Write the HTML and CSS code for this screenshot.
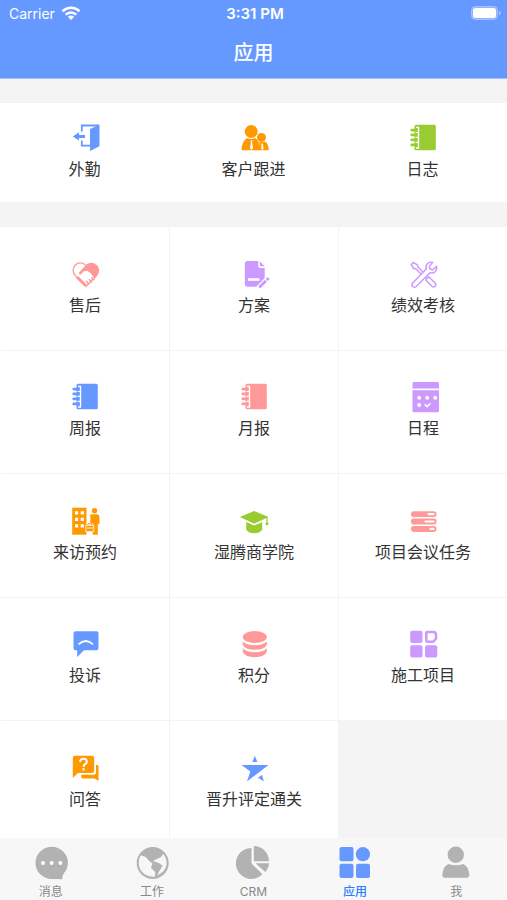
FILE: index.html
```html
<!DOCTYPE html>
<html lang="zh-CN">
<head>
    <meta charset="UTF-8">
    <meta name="viewport" content="width=device-width, initial-scale=1.0">
    <title>应用</title>
    <link rel="stylesheet" href="styles.css">
</head>
<body>
    <!-- Shared by the three report entries -->
    <svg class="sprite" aria-hidden="true">
        <symbol id="notebook" viewBox="0 0 30 30">
            <path fill="currentColor" d="M8 1.7h18.3q1.5 0 1.5 1.5v22.6q0 1.5-1.5 1.5H8q-1.5 0-1.5-1.5v-2.6H3.700a1.3 1.3 0 0 1 0-2.6h2.8v-2.4H3.7a1.3 1.3 0 0 1 0-2.6h2.8v-2.4H3.7a1.3 1.3 0 0 1 0-2.6h2.8V8.4H3.7a1.3 1.3 0 0 1 0-2.6h2.8V3.2q0-1.5 1.5-1.5z"/>
            <path fill="none" stroke="#fff" stroke-width="1.4" d="M8 4.4h2.5v20.6H8"/>
            <path stroke="#fff" stroke-width="1.2" d="M7.5 9.5h3M7.5 14.3h3M7.5 19.3h3"/>
        </symbol>
    </svg>

    <div class="app">
        <header class="header">
            <div class="status-bar">
                <div class="carrier">
                    <span>Carrier</span>
                    <svg width="20" height="14" viewBox="0 0 20 14" fill="none" stroke="#fff" stroke-width="2.6">
                        <path d="M1.5 5.2a12.2 12.2 0 0 1 17 0M4.7 8.6a7.6 7.6 0 0 1 10.6 0"/>
                        <path fill="#fff" stroke="none" d="M10 14l-3.2-3.2a4.6 4.6 0 0 1 6.4 0z"/>
                    </svg>
                </div>
                <span class="time">3:31 PM</span>
                <svg class="battery" width="30" height="14" viewBox="0 0 30 14">
                    <rect x=".5" y=".5" width="26" height="13" rx="4" fill="#8fb3ff" stroke="#a5c2ff"/>
                    <rect x="2" y="2" width="23" height="10" rx="2.5" fill="#fff"/>
                    <path fill="#a5c2ff" d="M28 4.5q2 1 2 2.5t-2 2.5z"/>
                </svg>
            </div>
            <h1>应用</h1>
        </header>

        <main class="content">
            <nav class="shortcuts" aria-label="常用">
                <a class="item blue" href="#">
                    <svg class="icon" viewBox="0 0 30 30">
                        <path fill="none" stroke="currentColor" stroke-width="1.8" d="M11.8 8.5V2.5H29M11.8 17.5v5.2H20"/>
                        <path fill="currentColor" d="M20 6l9.5-4.2v21.4L20 28zM2.8 13.4L9 9.3v2.6h6v3H9v2.7z"/>
                    </svg>
                    <span>外勤</span>
                </a>
                <a class="item orange" href="#">
                    <svg class="icon" viewBox="0 0 30 30">
                        <circle cx="12.2" cy="8.5" r="6.5" fill="currentColor"/>
                        <path fill="currentColor" d="M2.5 27.2q.2-9.4 6-12.2 3.7 2 7.4 0 5 2.2 5.3 12.2z"/>
                        <circle cx="22.5" cy="14.4" r="4.5" fill="currentColor"/>
                        <path fill="currentColor" d="M20.5 27.200V18.400q3 1.400 5.300 0 3.700 1.700 4 8.800z"/>
                        <path fill="#fff" d="M11.5 17.5h2l-.4 2 1 5.5-1.600 2-1.600-2 1-5.5zM22.500 20.500h1.300l.8 5-1.400 1.700-1-1.700z"/>
                    </svg>
                    <span>客户跟进</span>
                </a>
                <a class="item green" href="#">
                    <svg class="icon"><use href="#notebook"/></svg>
                    <span>日志</span>
                </a>
            </nav>

            <nav class="grid" aria-label="全部应用">
                <a class="item pink" href="#">
                    <svg class="icon" viewBox="0 0 30 30">
                        <path fill="none" stroke="currentColor" stroke-width="1.3" d="M16 6.5C13 3 8 3.3 5.2 6.2c-3 3-2.7 7.5.2 10.7L16 27.3l10.5-10.6"/>
                        <path fill="currentColor" d="M9 13.5l7-7.5c3-3.2 7.500-3 10.500-.3 3.500 3.300 3.500 8 .3 11.300l-2.300 2.500-4-5.500-3.200-2.300-3.500.6-3 3.200q-2 .3-1.800-2z"/>
                        <path fill="none" stroke="currentColor" stroke-width="3" d="M7 18l8.500 8.500"/>
                        <path fill="none" stroke="currentColor" stroke-width="1.4" stroke-linecap="round" d="M16.500 22.300l2.300 2.800M19.300 20.500l2.300 2.700M21.700 18.500l2.300 2.300"/>
                    </svg>
                    <span>售后</span>
                </a>
                <a class="item purple" href="#">
                    <svg class="icon" viewBox="0 0 30 30">
                        <path fill="currentColor" d="M8.8 2h10.400v4.500q0 2.500 2.500 2.500h4v10.200L18 27.800H8.800q-3 0-3-3V5q0-3 3-3z"/>
                        <path fill="currentColor" d="M20.700 2.200l5 5h-3.500q-1.500 0-1.500-1.500z"/>
                        <path stroke="#fff" stroke-width="2.6" d="M9 20.500h11.500"/>
                        <path stroke="#fff" stroke-width="5" d="M19 29.500l10-10"/>
                        <path stroke="currentColor" stroke-width="2.800" d="M20.200 28.500l6.800-6.800M27.700 21l2-2"/>
                    </svg>
                    <span>方案</span>
                </a>
                <a class="item purple" href="#">
                    <svg class="icon" viewBox="0 0 30 30" fill="#fff" stroke="currentColor" stroke-width="1.5" stroke-linejoin="round">
                        <path d="M3.200 5.500l2-2 4.300 2.300.5 2.200L19 17l-2 2-9-9-2.300-.5z"/>
                        <path d="M18.500 20l2.300-2.300 6.300 6.300q1.500 1.700 0 3.200-1.500 1.500-3.200 0l-5.400-5.400q-.8-.8 0-1.800z"/>
                        <path d="M24.700 3.500l-3.500 3.700.8 2.800 2.900.7 3.500-3.500q.8 3.300-1.200 5.500-2.200 2-5.200 1L8.200 27.500q-1.700 1.500-3.500 0-1.700-1.700 0-3.500L18.300 10q-1-3.200 1-5.300 2.200-2.200 5.400-1.200z"/>
                    </svg>
                    <span>绩效考核</span>
                </a>
                <a class="item blue" href="#">
                    <svg class="icon"><use href="#notebook"/></svg>
                    <span>周报</span>
                </a>
                <a class="item pink" href="#">
                    <svg class="icon"><use href="#notebook"/></svg>
                    <span>月报</span>
                </a>
                <a class="item purple" href="#">
                    <svg class="icon" viewBox="0 0 30 30">
                        <path fill="currentColor" d="M6 0h23.500q1.500 0 1.500 1.500v5H4.500v-5Q4.500 0 6 0zM4.500 8.300H31v20.500q0 1.500-1.500 1.500H6q-1.500 0-1.500-1.500z"/>
                        <g fill="#fff">
                            <circle cx="11.2" cy="15.7" r="2"/>
                            <circle cx="19.2" cy="15.7" r="2"/>
                            <circle cx="27.2" cy="15.7" r="2"/>
                            <circle cx="11.2" cy="23" r="2"/>
                        </g>
                        <path fill="none" stroke="#fff" stroke-width="1.5" d="M16.700 22.300l2.400 2.300 3.400-3.400"/>
                    </svg>
                    <span>日程</span>
                </a>
                <a class="item orange" href="#">
                    <svg class="icon" viewBox="0 0 30 30">
                        <path fill="currentColor" d="M2.200 1.700h14.300v27H2.200z"/>
                        <path fill="#fff" d="M5 5.300h3.200v3.200H5zM10.700 5.300h3.200v3.200h-3.200zM5 11.800h3.200V15H5zM10.700 11.800h3.200V15h-3.200zM5 18.300h3.200v3.200H5zM10.700 18.300h3.200v3.200h-3.200z"/>
                        <circle cx="24.5" cy="4.7" r="2.7" fill="currentColor"/>
                        <path fill="currentColor" d="M21.800 8.300h5.400q2.300.3 2.300 3V18h-1.700v10.700h-5.200V17h-2.200v-5.700q-.9-2.700 1.400-3z"/>
                        <path fill="currentColor" stroke="#fff" stroke-width=".8" d="M15.800 19.300h8v6.400h-8z"/>
                        <path fill="none" stroke="currentColor" d="M18 19.300v-1.600h3.700v1.600"/>
                        <path stroke="#fff" stroke-width=".8" d="M16.500 22h6.700"/>
                    </svg>
                    <span>来访预约</span>
                </a>
                <a class="item green" href="#">
                    <svg class="icon" viewBox="0 0 30 30">
                        <path fill="currentColor" d="M.8 11l14.400-6 14.300 6-14.300 6.700z"/>
                        <path fill="currentColor" d="M7.200 16l8 3.500 8-3.500v7.700q-2.500 3.500-8 3.500t-8-3.500z"/>
                        <path stroke="currentColor" stroke-width="1.2" d="M28 11v6"/>
                        <circle cx="28" cy="17.7" r="1.5" fill="currentColor"/>
                    </svg>
                    <span>湿腾商学院</span>
                </a>
                <a class="item pink" href="#">
                    <svg class="icon" viewBox="0 0 30 30">
                        <g fill="currentColor">
                            <rect x="3" y="5.2" width="25.5" height="5.9" rx="2.8"/>
                            <rect x="3" y="12.6" width="25.5" height="5.9" rx="2.8"/>
                            <rect x="3" y="20" width="25.5" height="5.9" rx="2.8"/>
                        </g>
                        <path stroke="#fff" stroke-width="2.2" stroke-linecap="round" d="M20.500 8.100h5M17.500 15.500h8M22.500 22.900h3"/>
                    </svg>
                    <span>项目会议任务</span>
                </a>
                <a class="item blue" href="#">
                    <svg class="icon" viewBox="0 0 30 30">
                        <path fill="currentColor" d="M5.500 2.300h21q2 0 2 2v15q0 2-2 2H14L7.200 28v-6.700H5.500q-2 0-2-2v-15q0-2 2-2z"/>
                        <path fill="none" stroke="#fff" stroke-width="1.8" d="M8.500 15.300q7.300-6.500 14.500 0"/>
                    </svg>
                    <span>投诉</span>
                </a>
                <a class="item pink" href="#">
                    <svg class="icon" viewBox="0 0 30 30">
                        <ellipse cx="15.8" cy="8" rx="12" ry="6" fill="currentColor"/>
                        <path fill="currentColor" d="M3.800 12.300q3.500 3.900 12 3.900t12-3.900v3.500q-2 5-12 5t-12-5zM3.800 19.300q3.500 3.900 12 3.900t12-3.900v3.500q-2 5.400-12 5.400t-12-5.400z"/>
                    </svg>
                    <span>积分</span>
                </a>
                <a class="item purple" href="#">
                    <svg class="icon" viewBox="0 0 30 30">
                        <g fill="currentColor">
                            <rect x="2.2" y="1.7" width="12.3" height="12.3" rx="2"/>
                            <rect x="2.2" y="16.3" width="12.3" height="12.3" rx="2"/>
                            <rect x="17" y="16.3" width="12.3" height="12.3" rx="2"/>
                        </g>
                        <path fill="none" stroke="currentColor" stroke-width="2.6" d="M19.400 3h5.800q2.800 0 2.800 2.800v4l-2.800 2.900h-5.800q-1.100 0-1.100-1.100V4.100q0-1.100 1.100-1.100z"/>
                    </svg>
                    <span>施工项目</span>
                </a>
                <a class="item orange" href="#">
                    <svg class="icon" viewBox="0 0 30 30">
                        <path fill="currentColor" d="M26 12h1q1.500 0 1.500 1.500V28l-3.700-2.600H13q-1.800 0-1.800-2v-1.600h12.500Q26 21.800 26 19.500z"/>
                        <path fill="currentColor" d="M5 2.700h17q2.200 0 2.200 2.200v12.900q0 2.200-2.200 2.200H8l-5.200 5V4.900Q2.800 2.700 5 2.700z"/>
                        <path fill="none" stroke="#fff" stroke-width="2" d="M10 8.800q.3-3 3.500-3t3.400 2.700q0 1.500-1.700 2.600-1.700 1-1.700 2.900M13.500 15.200v2.200"/>
                    </svg>
                    <span>问答</span>
                </a>
                <a class="item blue" href="#">
                    <svg class="icon" viewBox="0 0 30 30" fill="currentColor">
                        <path d="M15.800 2.700l2.600 6.200h-5zM2.500 12h27L8 28.500l3.300-10z"/>
                        <path d="M18.800 24.700l4.200-2.700 1.900 6.200z"/>
                    </svg>
                    <span>晋升评定通关</span>
                </a>
            </nav>
        </main>

        <nav class="tab-bar" aria-label="主导航">
            <a class="tab" href="#">
                <svg viewBox="0 0 34 34">
                    <path fill="currentColor" d="M17.700.7a16.200 16.200 0 0 1 16.200 16.200q0 5.500-3.700 9.800-2 2.500-1.900 6.600-5.400-.7-10.600-.2A16.200 16.200 0 0 1 17.700.7z"/>
                    <g fill="#fff">
                        <circle cx="9" cy="17" r="2"/>
                        <circle cx="17.7" cy="17" r="2"/>
                        <circle cx="26.3" cy="17" r="2"/>
                    </g>
                </svg>
                <span>消息</span>
            </a>
            <a class="tab" href="#">
                <svg viewBox="0 0 34 34">
                    <circle cx="17.7" cy="17" r="16" fill="currentColor"/>
                    <path fill="#f7f7f7" d="M5.800 9.300l5 1.700 4 4.500 2.500 1.700-1.300 4.800 4.300 4-.6 4.800C10.500 31.300 3.700 25 3.700 17q0-4.500 2.100-7.700z"/>
                    <path fill="#f7f7f7" d="M28.300 8q4 5 3.200 11-1 6.500-9.500 10.500l3-5.500 2.700-4.500-4-2.500-5.700-2 4.500-2.500 3-1z"/>
                </svg>
                <span>工作</span>
            </a>
            <a class="tab" href="#">
                <svg viewBox="0 0 34 34" fill="currentColor">
                    <path d="M15.500 2v15.500l11 10.800A15.500 15.500 0 1 1 15.500 2z"/>
                    <path d="M17.800 0A15.300 15.300 0 0 1 33 15.200H17.800zM19.500 17.300H33q-.3 5-3.700 8.600z"/>
                </svg>
                <span>CRM</span>
            </a>
            <a class="tab active" href="#" aria-current="page">
                <svg viewBox="0 0 34 34" fill="currentColor">
                    <rect x="1.5" y="1" width="14" height="14.3" rx="2"/>
                    <circle cx="24.9" cy="8.2" r="7.1"/>
                    <rect x="1.5" y="17.7" width="14" height="14.3" rx="2"/>
                    <rect x="18" y="17.7" width="14" height="14.3" rx="2"/>
                </svg>
                <span>应用</span>
            </a>
            <a class="tab" href="#">
                <svg viewBox="0 0 34 34" fill="currentColor">
                    <circle cx="16.8" cy="8.7" r="8.2"/>
                    <path d="M9.500 18q7.300 2.500 14.600 0 5.200 2 6.200 10.500.2 3.200-2.500 3.200h-22q-2.700 0-2.500-3.200Q4.300 20 9.500 18z"/>
                </svg>
                <span>我</span>
            </a>
        </nav>
    </div>
</body>
</html>
```
FILE: styles.css
```css
* {
    box-sizing: border-box;
}

body {
    margin: 0;
    font-family: Inter, "Noto Sans CJK SC", sans-serif;
    background-color: #f4f4f4;
    color: #333;
}

a {
    color: inherit;
    text-decoration: none;
}

.sprite {
    display: none;
}

.app {
    display: flex;
    flex-direction: column;
    height: 100vh;
}

/* Header */
.header {
    padding-bottom: 10px;
    background-color: #6699ff;
    border-bottom: 1px solid #a3c2fb;
    color: #fff;
}

.status-bar {
    display: grid;
    grid-template-columns: 1fr auto 1fr;
    align-items: center;
    height: 26px;
    padding: 0 6px 0 9px;
    font-size: 14px;
}

.carrier {
    display: flex;
    align-items: center;
    gap: 6px;
}

.time {
    font-size: 15px;
    font-weight: 600;
}

.battery {
    justify-self: end;
}

h1 {
    margin: 12px 0 0;
    font-size: 20px;
    font-weight: 500;
    line-height: 30px;
    text-align: center;
}

/* Content */
.content {
    flex: 1;
    min-height: 0;
    padding-top: 24px;
    overflow-y: auto;
    scrollbar-width: none;
}

.shortcuts,
.grid {
    display: grid;
    grid-template-columns: repeat(3, 1fr);
}

.shortcuts {
    height: 99px;
    margin-bottom: 25px;
    background-color: #fff;
}

.grid {
    grid-auto-rows: 124px 123px;
}

.item {
    display: flex;
    flex-direction: column;
    align-items: center;
    justify-content: center;
    gap: 4px;
    padding-bottom: 2px;
    background-color: #fff;
    font-size: 16px;
    line-height: 24px;
}

.grid .item {
    border-left: 1px solid #f3f3f3;
    border-bottom: 1px solid #f3f3f3;
}

.grid .item:nth-child(3n + 1) {
    border-left-color: #fff;
}

.icon {
    width: 30px;
    height: 30px;
    overflow: visible;
}

.blue .icon {
    color: #6699ff;
}

.orange .icon {
    color: #ff9900;
}

.green .icon {
    color: #99cc33;
}

.pink .icon {
    color: #ff9999;
}

.purple .icon {
    color: #cc99ff;
}

/* Tab bar */
.tab-bar {
    display: grid;
    grid-template-columns: repeat(5, 1fr);
    padding-top: 8px;
    background-color: #f7f7f7;
}

.tab {
    display: flex;
    flex-direction: column;
    align-items: center;
    gap: 4px;
    color: #888;
    font-size: 12px;
    line-height: 16px;
}

.tab svg {
    width: 34px;
    height: 34px;
    color: #b2b2b2;
}

.tab.active {
    color: #2680ff;
    font-weight: 500;
}

.tab.active svg {
    color: #6699ff;
}
```
